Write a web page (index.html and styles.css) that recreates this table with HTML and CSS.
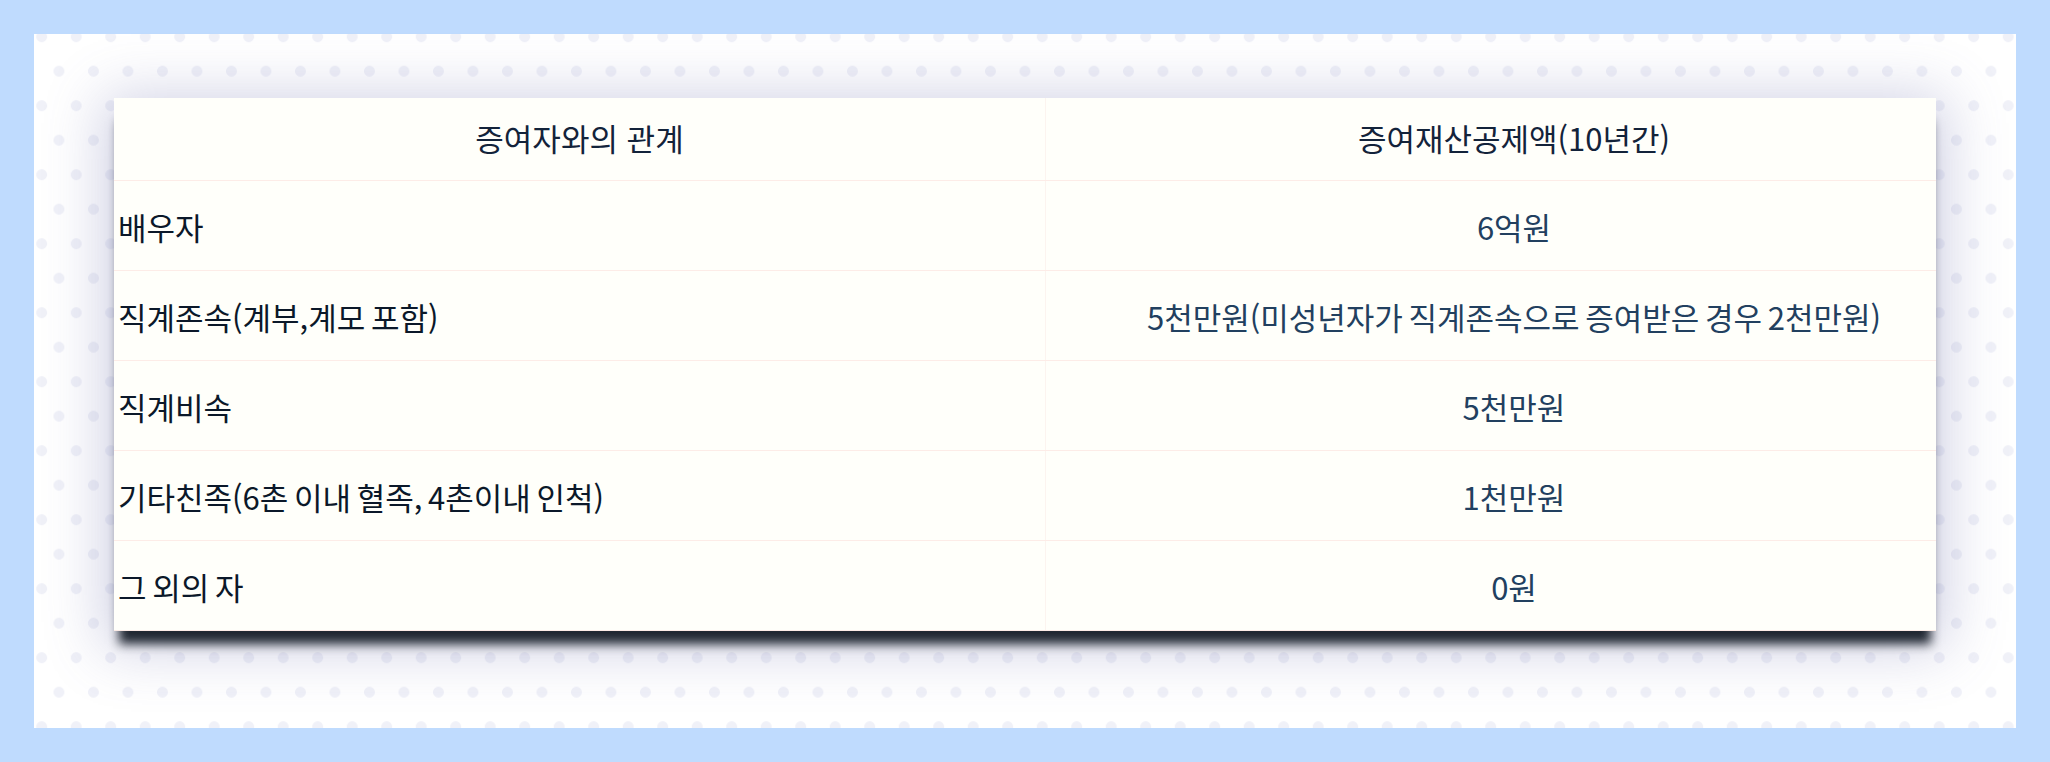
FILE: index.html
```html
<!DOCTYPE html>
<html lang="ko">
<head>
<meta charset="utf-8">
<title>증여재산공제</title>
<link rel="stylesheet" href="styles.css">
</head>
<body>
<main class="panel">
  <div class="card">
    <table class="gift-table">
      <thead>
        <tr>
          <th class="col-rel">증여자와의 관계</th>
          <th class="col-amt">증여재산공제액(10년간)</th>
        </tr>
      </thead>
      <tbody>
        <tr>
          <td class="col-rel">배우자</td>
          <td class="col-amt">6억원</td>
        </tr>
        <tr>
          <td class="col-rel">직계존속(계부,계모 포함)</td>
          <td class="col-amt">5천만원(미성년자가 직계존속으로 증여받은 경우 2천만원)</td>
        </tr>
        <tr>
          <td class="col-rel">직계비속</td>
          <td class="col-amt">5천만원</td>
        </tr>
        <tr>
          <td class="col-rel">기타친족(6촌 이내 혈족, 4촌이내 인척)</td>
          <td class="col-amt">1천만원</td>
        </tr>
        <tr>
          <td class="col-rel">그 외의 자</td>
          <td class="col-amt">0원</td>
        </tr>
      </tbody>
    </table>
  </div>
</main>
</body>
</html>
```
FILE: styles.css
```css
html, body {
  margin: 0;
  padding: 0;
}

body {
  background: #bfdbfe;
  padding: 34px;
  font-family: "Noto Sans CJK KR", "Noto Sans", sans-serif;
}

.panel {
  display: block;
  box-sizing: border-box;
  height: 694px;
  padding: 64px 80px 0 80px;
  background-color: #ffffff;
  background-image:
    radial-gradient(circle at center, #f0f1f8 0, #f0f1f8 5px, rgba(240,241,248,0) 5.8px),
    radial-gradient(circle at center, #f0f1f8 0, #f0f1f8 5px, rgba(240,241,248,0) 5.8px);
  background-size: 34.5px 69px, 34.5px 69px;
  background-position: -9.55px -31.8px, 7.7px 2.7px;
}

.card {
  background: #fffffa;
  box-shadow:
    0 18px 10px -5px rgba(22, 30, 40, 0.95),
    0 8px 55px 10px rgba(95, 100, 165, 0.3);
}

.gift-table {
  width: 100%;
  border-collapse: collapse;
  table-layout: fixed;
  font-size: 31px;
  line-height: 42px;
}

.gift-table th,
.gift-table td {
  border-bottom: 1px solid #fdece7;
  padding: 0;
  vertical-align: middle;
}

.gift-table .col-rel {
  width: 931px;
  border-right: 1px solid #fcf4ef;
}

.gift-table th {
  height: 79px;
  padding-bottom: 3px;
  font-weight: 400;
  color: #13233a;
  text-align: center;
}

.gift-table th.col-amt {
  padding-left: 46px;
}

.gift-table td {
  height: 87px;
  padding-top: 2px;
  word-spacing: -3px;
}

.gift-table td.col-rel {
  text-align: left;
  padding-left: 4px;
  color: #0b1829;
}

.gift-table td.col-amt {
  text-align: center;
  padding-left: 46px;
  color: #22405f;
}
```
